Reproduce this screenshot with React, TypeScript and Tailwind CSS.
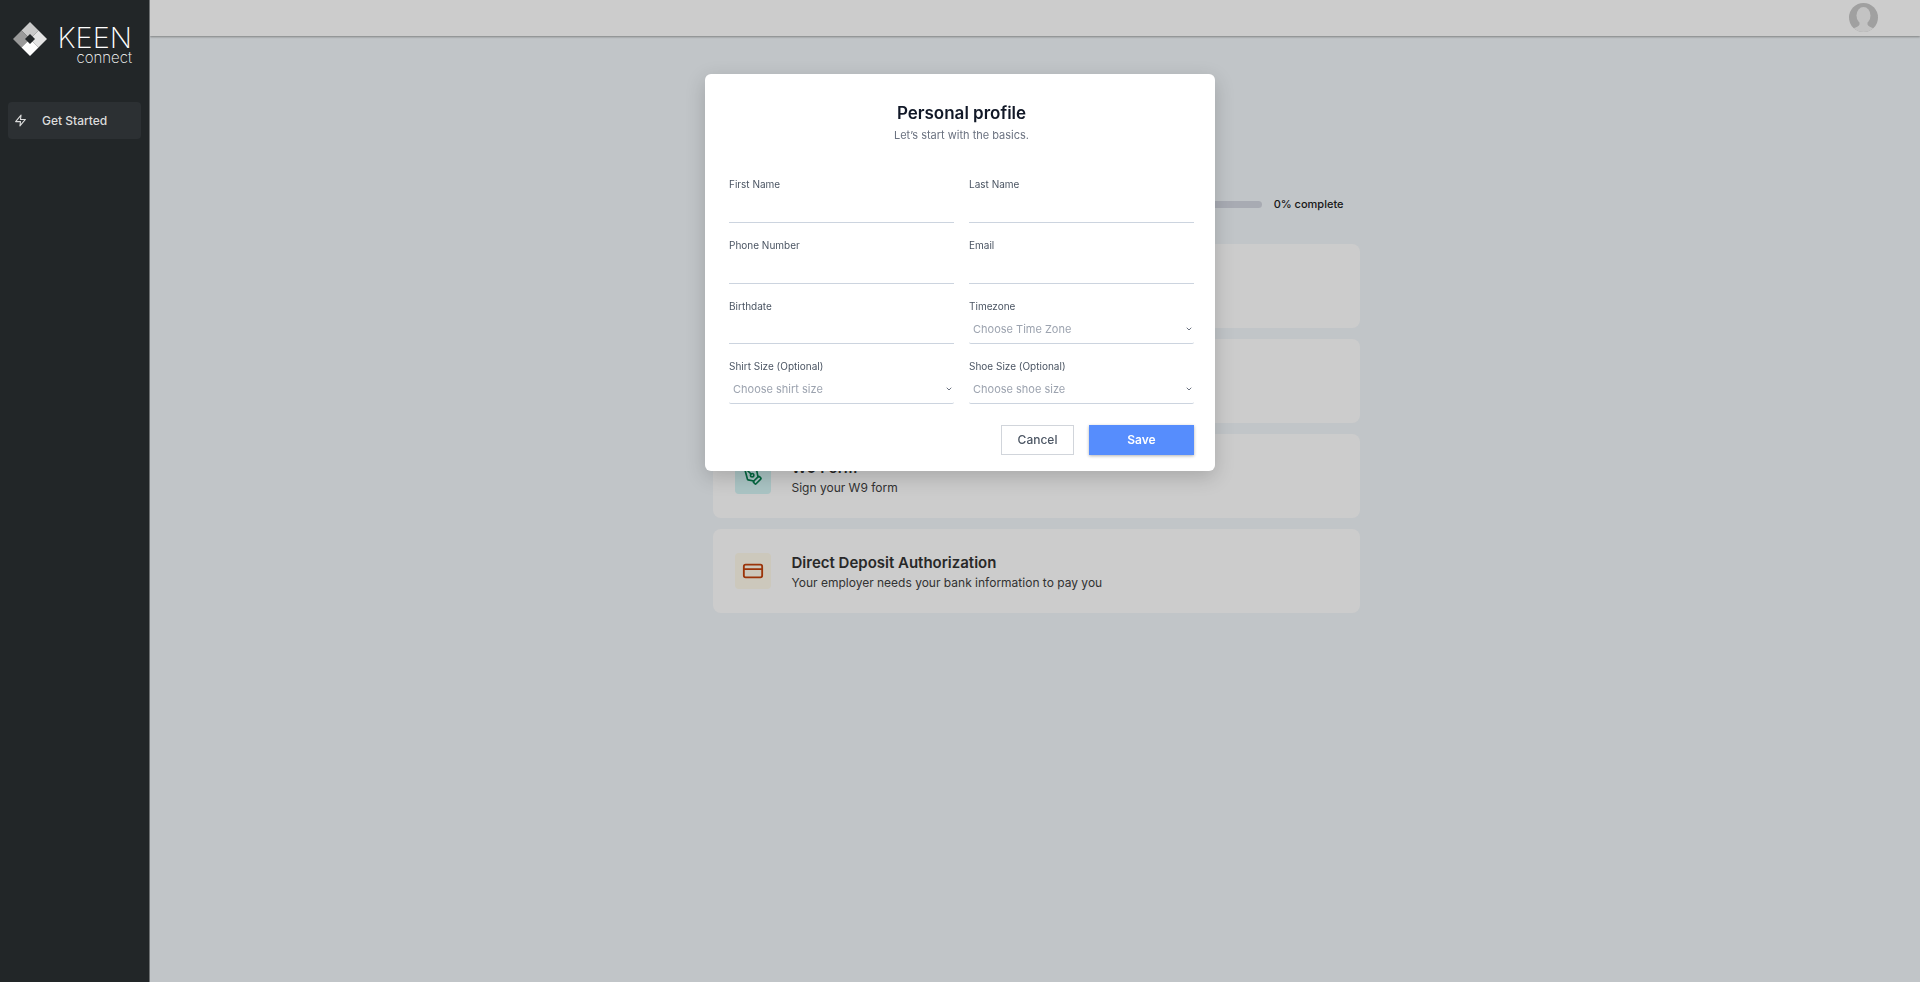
import React, { useState } from 'react';
import { ChevronDown, CreditCard, PenTool } from 'lucide-react';
import { FiZap } from 'react-icons/fi';

const steps = [
  { id: 'profile' },
  { id: 'documents' },
  {
    id: 'w9',
    icon: <PenTool className="w-5 h-5" strokeWidth={2} />,
    tile: 'bg-[#d5f5f6] text-[#058150]',
    title: 'W9 Form',
    description: 'Sign your W9 form',
  },
  {
    id: 'deposit',
    icon: <CreditCard className="w-[22px] h-[22px]" strokeWidth={2} />,
    tile: 'bg-[#fffbeb] text-[#c2410c]',
    title: 'Direct Deposit Authorization',
    description: 'Your employer needs your bank information to pay you',
  },
];

const textFields = [
  { id: 'firstName', label: 'First Name', type: 'text', height: 'h-[31px]' },
  { id: 'lastName', label: 'Last Name', type: 'text', height: 'h-[31px]' },
  { id: 'phone', label: 'Phone Number', type: 'tel', height: 'h-[31px]' },
  { id: 'email', label: 'Email', type: 'email', height: 'h-[31px]' },
  { id: 'birthdate', label: 'Birthdate', type: 'text', height: 'h-[30px]' },
];

const selectFields = [
  { id: 'timezone', label: 'Timezone', placeholder: 'Choose Time Zone' },
  { id: 'shirtSize', label: 'Shirt Size (Optional)', placeholder: 'Choose shirt size' },
  { id: 'shoeSize', label: 'Shoe Size (Optional)', placeholder: 'Choose shoe size' },
];

const Logo = () => (
  <div className="flex items-end pl-[13px] pt-[22px]">
    <svg className="mb-2 h-[34px] w-[34px]" viewBox="0 0 34 34">
      <path d="M17 0 L25.5 8.5 L17 17 L8.5 8.5 Z" fill="#c9c9c9" />
      <path d="M8.5 8.5 L17 17 L8.5 25.5 L0 17 Z" fill="#9a9a9a" />
      <path d="M25.5 8.5 L34 17 L25.5 25.5 L17 17 Z" fill="#e4e4e4" />
      <path d="M8.5 25.5 L17 17 L25.5 25.5 L17 34 Z" fill="#ffffff" />
      <path d="M17 12 L22 17 L17 22 L12 17 Z" fill="#222628" />
    </svg>
    <div className="ml-[6px] flex w-[79px] flex-col items-end text-white">
      <span className="text-[29px] leading-7 font-extralight">KEEN</span>
      <span className="text-[15px] leading-3 font-extralight">connect</span>
    </div>
  </div>
);

const Sidebar = () => (
  <aside className="relative z-30 w-[150px] shrink-0 border-r border-[#6d7072] bg-[#222628]">
    <Logo />
    <nav className="mt-[38px] px-2">
      <a
        href="#get-started"
        className="flex h-[37px] items-center rounded-sm bg-[#2c3033] pl-[6px] text-xs font-medium text-[#dcdcdc]"
      >
        <FiZap className="w-[13px] h-[13px]" />
        <span className="ml-[15px]">Get Started</span>
      </a>
    </nav>
  </aside>
);

const TopBar = () => (
  <header className="flex h-9 items-start justify-end bg-white pt-[3px] pr-[42px] shadow-[0_1px_2px_rgba(0,0,0,0.35)]">
    <button aria-label="Account" className="h-[29px] w-[29px] overflow-hidden rounded-full">
      <svg viewBox="0 0 29 29" className="h-full w-full">
        <rect width="29" height="29" fill="#c8c8c8" />
        <ellipse cx="14.5" cy="12.5" rx="7" ry="8.5" fill="#f4f4f4" />
        <path d="M10.5 17 V21.5 Q10 23.5 4 25.5 V29 H25 V25.5 Q19 23.5 18.5 21.5 V17 Z" fill="#f4f4f4" />
      </svg>
    </button>
  </header>
);

const ProfileModal = () => {
  const [values, setValues] = useState<Record<string, string>>({});
  const update = (id: string, value: string) => setValues({ ...values, [id]: value });

  return (
    <div className="fixed inset-0 z-40 flex items-start justify-center pt-[74px]">
      <div
        role="dialog"
        aria-labelledby="profile-title"
        className="w-[510px] rounded-md bg-white pt-7 pr-[21px] pb-4 pl-6 shadow-[0_6px_20px_rgba(0,0,0,0.18)]"
      >
        <div className="text-center">
          <h2 id="profile-title" className="text-[17px] leading-[22px] font-semibold text-[#111827]">
            Personal profile
          </h2>
          <p className="mt-[3px] text-[11px] leading-4 text-[#6b7280]">Let’s start with the basics.</p>
        </div>

        <form onSubmit={(e) => e.preventDefault()}>
          <div className="mt-[33px] grid grid-cols-2 gap-x-[15px] gap-y-[14px]">
            {textFields.map((field) => (
              <div key={field.id}>
                <label htmlFor={field.id} className="block text-[10px] leading-4 text-[#4b5563]">
                  {field.label}
                </label>
                <input
                  id={field.id}
                  type={field.type}
                  value={values[field.id] ?? ''}
                  onChange={(e) => update(field.id, e.target.value)}
                  className={`block w-full border-b border-[#ccd4df] text-[11px] outline-none ${field.height}`}
                />
              </div>
            ))}
            {selectFields.map((field) => (
              <div key={field.id}>
                <label htmlFor={field.id} className="block text-[10px] leading-4 text-[#4b5563]">
                  {field.label}
                </label>
                <div className="relative">
                  <select
                    id={field.id}
                    value={values[field.id] ?? ''}
                    onChange={(e) => update(field.id, e.target.value)}
                    className="block h-[30px] w-full appearance-none rounded-xs border-b border-[#ccd4df] pt-px pl-1 text-[11px] text-[#9ca3af] outline-none"
                  >
                    <option value="">{field.placeholder}</option>
                  </select>
                  <ChevronDown
                    className="pointer-events-none absolute top-[11px] right-px h-2 w-2 text-[#6b7280]"
                    strokeWidth={3}
                  />
                </div>
              </div>
            ))}
          </div>

          <div className="mt-[21px] flex justify-end gap-[15px]">
            <button
              type="button"
              className="h-[30px] w-[73px] border border-[#d1d5db] text-xs font-medium text-[#4b5563]"
            >
              Cancel
            </button>
            <button
              type="submit"
              className="h-[30px] w-[105px] bg-[#568dfd] text-xs font-semibold text-white shadow-[0_1px_3px_rgba(0,0,0,0.3)]"
            >
              Save
            </button>
          </div>
        </form>
      </div>
    </div>
  );
};

const App = () => {
  return (
    <div className="flex min-h-screen bg-[#f2f7fa] font-['Inter',sans-serif]">
      <Sidebar />
      <div className="flex-1">
        <TopBar />
        <main className="pl-[2px]">
          <div className="mx-auto max-w-[647px] pt-[160px]">
            <div className="flex items-center pr-4">
              <div className="h-[7px] flex-1 rounded-full bg-[#d3d6e0]"></div>
              <p className="ml-3 text-[11px] leading-4 font-medium text-[#222222]">0% complete</p>
            </div>

            <div className="mt-8 flex flex-col gap-[11px]">
              {steps.map((step) => (
                <div key={step.id} className="flex h-[84px] items-center rounded-lg bg-white pl-[22px]">
                  {step.title && (
                    <>
                      <div className={`flex h-9 w-9 items-center justify-center rounded-sm ${step.tile}`}>
                        {step.icon}
                      </div>
                      <div className="ml-[21px] pt-1">
                        <h3 className="text-[15px] leading-5 font-semibold text-[#333333]">{step.title}</h3>
                        <p className="text-xs leading-5 text-[#404040]">{step.description}</p>
                      </div>
                    </>
                  )}
                </div>
              ))}
            </div>
          </div>
        </main>
      </div>
      <div className="fixed inset-0 z-20 bg-black/20"></div>
      <ProfileModal />
    </div>
  );
};

export default App;
